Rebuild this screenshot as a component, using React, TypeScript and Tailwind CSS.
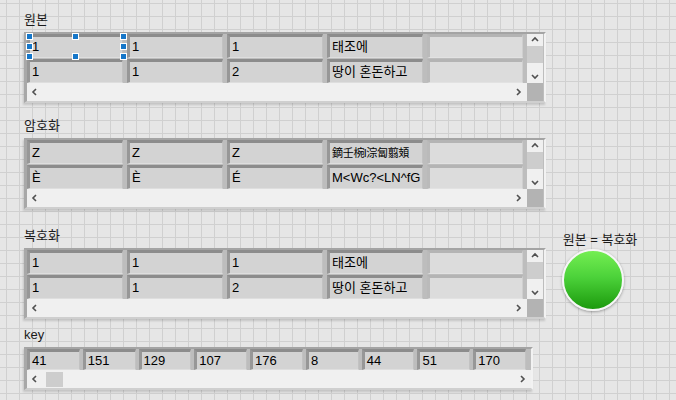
import React from 'react';

const FONT = "font-['Liberation_Sans','Noto_Sans_CJK_KR',sans-serif]";

type Cell = string;

const Chevron = ({ dir }: { dir: 'left' | 'right' | 'up' | 'down' }) => {
  const pts: Record<string, string> = {
    left: '5,1 2,4 5,7',
    right: '2,1 5,4 2,7',
    up: '1,5 4,2 7,5',
    down: '1,2 4,5 7,2',
  };
  return (
    <svg width="8" height="8" viewBox="0 0 8 8" className="block">
      <polyline points={pts[dir]} fill="none" stroke="#505050" strokeWidth="1.6" />
    </svg>
  );
};

const TableCell = ({ value, empty }: { value: Cell; empty?: boolean }) => {
  // the hanzi string is wider than the cell at 13px, shrink it a little
  const dense = /[\u4e00-\u9fff]/.test(value);
  return (
    <div
      className={`h-full border-t-[3px] border-l-[3px] border-r border-b pl-[2px] flex items-center text-black whitespace-nowrap overflow-hidden ${
        dense ? 'text-[11px] tracking-[-0.3px]' : 'text-[13px]'
      } ${
        empty
          ? 'bg-[#dcdcdc] border-t-[#b4b4b4] border-l-[#bababa] border-r-[#cfcfcf] border-b-[#e2e2e2]'
          : 'bg-[#d3d3d3] border-t-[#8c8c8c] border-l-[#979797] border-r-[#c2c2c2] border-b-[#dedede]'
      }`}
    >
      {value}
    </div>
  );
};

const Handle = ({ className }: { className: string }) => (
  <div className={`absolute w-[7px] h-[7px] bg-[#1677c9] border border-white ${className}`} />
);

const Table = ({ label, rows, selected }: { label: string; rows: Cell[][]; selected?: boolean }) => (
  <div className="flex flex-col">
    <div className="h-[20px] leading-[20px] text-[13px] text-[#1a1a1a] mb-[2px]">{label}</div>
    <div className="w-[522px] bg-[#bdbdbd] border-t-2 border-l-[3px] border-r-2 border-b-2 border-t-[#a4a4a4] border-l-[#a8a8a8] border-r-[#f2f2f2] border-b-[#cfcfcf] shadow-[-1px_2px_2px_rgba(0,0,0,0.15)]">
      <div className="flex">
        <div className="w-[496px] grid grid-cols-5 grid-rows-[24px_24px] gap-x-[4px] gap-y-[1px] relative">
          {rows.flatMap((r, ri) =>
            r.map((c, ci) => <TableCell key={`${ri}-${ci}`} value={c} empty={ci === 4} />)
          )}
          {selected && (
            <>
              <Handle className="left-[-1px] top-[-1px]" />
              <Handle className="left-[45px] top-[-1px]" />
              <Handle className="left-[93px] top-[-1px]" />
              <Handle className="left-[-1px] top-[9px]" />
              <Handle className="left-[93px] top-[9px]" />
              <Handle className="left-[-1px] top-[19px]" />
              <Handle className="left-[45px] top-[19px]" />
              <Handle className="left-[93px] top-[19px]" />
            </>
          )}
        </div>
        <div className="ml-[4px] w-[16px] bg-[#f0f0f0] flex flex-col items-center">
          <div className="h-[12px] flex items-center">
            <Chevron dir="up" />
          </div>
          <div className="w-[16px] h-[17px] bg-[#cdcdcd]" />
          <div className="flex-1 flex items-end pb-[2px]">
            <Chevron dir="down" />
          </div>
        </div>
      </div>
      <div className="flex">
        <div className="w-[500px] h-[18px] bg-[#f0f0f0] flex items-center justify-between px-[4px]">
          <Chevron dir="left" />
          <Chevron dir="right" />
        </div>
        <div className="w-[16px] h-[18px] bg-[#b3b3b3]" />
      </div>
    </div>
  </div>
);

const original: Cell[][] = [
  ['1', '1', '1', '태조에', ''],
  ['1', '1', '2', '땅이 혼돈하고', ''],
];

const encrypted: Cell[][] = [
  ['Z', 'Z', 'Z', '鏑壬椀l淙匐翦頍', ''],
  ['È', 'È', 'É', 'M<Wc?<LN^fG', ''],
];

const keys = ['41', '151', '129', '107', '176', '8', '44', '51', '170'];

export default function App() {
  return (
    <div
      className={`${FONT} w-[676px] h-[400px] overflow-hidden bg-[#e6e6e6] bg-[linear-gradient(#d0d0d0_1px,transparent_1px),linear-gradient(90deg,#d0d0d0_1px,transparent_1px)] bg-[size:13px_13px] bg-[position:6px_3px] pl-[24px] pt-[10px] flex flex-col`}
    >
      <Table label="원본" rows={original} selected />
      <div className="mt-[13px]">
        <Table label="암호화" rows={encrypted} />
      </div>
      <div className="mt-[17px] flex items-start">
        <Table label="복호화" rows={original} />
        <div className="ml-[14px] mt-[4px] w-[80px] flex flex-col items-center">
          <div className="h-[20px] leading-[20px] text-[13px] text-[#1a1a1a] whitespace-nowrap">원본 = 복호화</div>
          <div className="mt-[-1px] ml-[-14px] w-[62px] h-[62px] rounded-full border-2 border-[#f6f6f6] bg-[linear-gradient(to_bottom,#74ee52,#4cd23a_45%,#1c9a0d)] shadow-[0_1px_3px_rgba(0,0,0,0.35)]" />
        </div>
      </div>
      <div className="mt-[6px] flex flex-col">
        <div className="h-[20px] leading-[20px] text-[13px] text-[#1a1a1a] mb-[2px]">key</div>
        <div className="w-[509px] bg-[#bdbdbd] border-t-2 border-l-[3px] border-r-2 border-b-2 border-t-[#a4a4a4] border-l-[#a8a8a8] border-r-[#f2f2f2] border-b-[#cfcfcf] shadow-[-1px_2px_2px_rgba(0,0,0,0.15)]">
          <div className="grid grid-cols-9 gap-x-[3px] h-[21px] w-[499px]">
            {keys.map((k, i) => (
              <TableCell key={i} value={k} />
            ))}
          </div>
          <div className="w-[504px] h-[18px] bg-[#f0f0f0] flex items-center px-[4px]">
            <Chevron dir="left" />
            <div className="ml-[7px] w-[17px] h-[15px] bg-[#cdcdcd]" />
            <div className="flex-1" />
            <Chevron dir="right" />
          </div>
        </div>
      </div>
    </div>
  );
}
